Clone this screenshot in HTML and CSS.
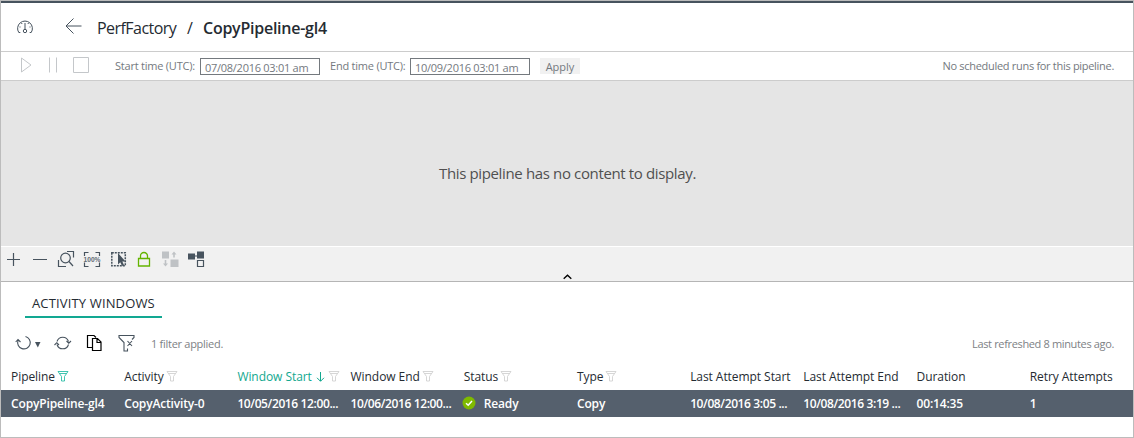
FILE: index.html
```html
<!DOCTYPE html>
<html lang="en">
<head>
<meta charset="utf-8">
<title>CopyPipeline-gl4</title>
<link rel="stylesheet" href="styles.css">
</head>
<body>
<svg class="defs" width="0" height="0">
  <defs>
    <symbol id="funnel" viewBox="0 0 12 12"><path d="M1 1.500h10L7.500 6.500v4.500h-3V6.500zM2.500 3.500h7"/></symbol>
  </defs>
</svg>
<div class="app">
  <header class="header">
    <svg class="gauge" width="18" height="16" viewBox="0 0 18 16"><path d="M4.300 13.500H2.800A7.400 7.400 0 1 1 15.200 13.500h-1.500M9 4v6.300"/><circle cx="9" cy="12" r="1.700"/><path class="ticks" d="M3.500 8h1M13.500 8h1M5.300 4.500h1M11.700 4.500h1"/></svg>
    <svg class="back" width="17" height="17" viewBox="0 0 17 17"><path d="M8.500 .5 1 8l7.500 7.500M1 8h15.500"/></svg>
    <nav class="crumbs"><span class="factory">PerfFactory</span><span class="slash">/</span><strong class="name">CopyPipeline-gl4</strong></nav>
  </header>
  <div class="runbar">
    <svg class="run-icons" width="70" height="18" viewBox="0 0 70 18"><path d="M1.500 2v14L11 9zM29.500 1.500v15M36.500 1.500v15M53.500 1.500h15v15h-15z"/></svg>
    <span class="label start">Start time (UTC):</span><span class="field">07/08/2016 03:01 am</span>
    <span class="label end">End time (UTC):</span><span class="field">10/09/2016 03:01 am</span>
    <span class="apply">Apply</span>
    <span class="schedule">No scheduled runs for this pipeline.</span>
  </div>
  <main class="canvas"><span class="empty">This pipeline has no content to display.</span></main>
  <div class="tools">
    <svg class="tool-icons" width="206" height="22" viewBox="0 0 206 22">
      <g class="dark">
        <path d="M7 11.500h13M13.500 5v13M33 11.500h14"/>
        <path d="M67 3.500h6.500V9.500M58.500 12v6.500H66"/><circle cx="65.500" cy="10" r="4.800"/><path d="m69 13.500 4 4.500"/>
        <path d="M88.500 4.500h-4v3.500M95.500 4.500h4v3.500M84.500 14.500v4h4M99.500 14.500v4h-4"/>
        <path class="dotted" d="M111.800 4.800h13.500v13h-13.500z"/>
      </g>
      <text class="percent" x="83.500" y="14" textLength="17" lengthAdjust="spacingAndGlyphs">100%</text>
      <path class="solid" d="M118 5v11.500l2.300-2.200 1.700 3.700 2-.9-1.700-3.600h3.200z"/>
      <path class="lock" d="M138.500 10.500h11v7.500h-11zM140.500 10.500V8a3.500 3.500 0 0 1 7 0v2.500"/>
      <path class="muted" d="M162 3.500h7v7h-7zM170.500 11.500h8v7.500h-8zM173.200 9.500v-3H171.500l2.500-3 2.500 3h-1.700v3zM164.700 12v3.500H163l2.500 3 2.500-3h-1.700V12z"/>
      <path class="solid" d="M188 5.500h7v2h2V3.500h7v7h-7V8.500h-2v3h-7z"/>
      <path class="dark" d="M197.500 12.500h6v6h-6z"/>
    </svg>
    <svg class="chevron" width="9" height="6" viewBox="0 0 9 6"><path d="M.7 4.800 4.500 1.300l3.800 3.500"/></svg>
  </div>
  <section class="activity">
    <div class="tabs"><span class="tab"><span>ACTIVITY WINDOWS</span></span></div>
    <div class="actions">
      <svg class="action-icons" width="122" height="20" viewBox="0 0 122 20">
        <g class="dark thin"><path d="M3 7.500A6.300 6.300 0 1 0 10.500 3.500M.7 9 3 6.500l2.500 2.500"/><path d="M42 8.500A6 6 0 0 1 53.500 8.500M53.500 11.500a6 6 0 0 1-11.500 0M51.500 8l2.300 2.200L56 8M39.500 12l2.300-2.300L44 12"/><path d="M112.500 15.500v2.500h-3.500V9.500L104 4.500v-2h15v2l-2 2M112.500 8l4.500 5M117 8l-4.500 5"/></g>
        <path class="solid" d="M20 9h5.500l-2.700 5.500z"/>
        <path class="copy" d="M77 14.500h-4.500v-12H79l2 2M77.500 5.500h5l3.500 3.500v8.500h-8.500zM82 5.500v4h4"/>
      </svg>
      <span class="filter-note">1 filter applied.</span>
      <span class="refreshed">Last refreshed 8 minutes ago.</span>
    </div>
    <div class="row head">
      <span class="cell"><span>Pipeline</span><svg class="funnel on"><use href="#funnel"/></svg></span>
      <span class="cell"><span>Activity</span><svg class="funnel"><use href="#funnel"/></svg></span>
      <span class="cell sorted"><span>Window Start</span><svg class="sort" width="9" height="12" viewBox="0 0 9 12"><path d="M4.500 1v9M1 6.800l3.500 3.500L8 6.800"/></svg><svg class="funnel"><use href="#funnel"/></svg></span>
      <span class="cell"><span>Window End</span><svg class="funnel"><use href="#funnel"/></svg></span>
      <span class="cell"><span>Status</span><svg class="funnel"><use href="#funnel"/></svg></span>
      <span class="cell"><span>Type</span><svg class="funnel"><use href="#funnel"/></svg></span>
      <span class="cell">Last Attempt Start</span>
      <span class="cell">Last Attempt End</span>
      <span class="cell">Duration</span>
      <span class="cell">Retry Attempts</span>
    </div>
    <div class="row data">
      <span class="cell">CopyPipeline-gl4</span>
      <span class="cell">CopyActivity-0</span>
      <span class="cell date">10/05/2016 12:00...</span>
      <span class="cell date">10/06/2016 12:00...</span>
      <span class="cell status"><svg width="14" height="14" viewBox="0 0 14 14"><circle cx="7" cy="7" r="6.500"/><path d="m4 7.200 2.200 2L10 5"/></svg>Ready</span>
      <span class="cell">Copy</span>
      <span class="cell date">10/08/2016 3:05 ...</span>
      <span class="cell date">10/08/2016 3:19 ...</span>
      <span class="cell">00:14:35</span>
      <span class="cell">1</span>
    </div>
  </section>
</div>
</body>
</html>
```
FILE: styles.css
```css
* { box-sizing: border-box; }
body { margin: 0; background: #fff; font-family: "Open Sans", "Noto Sans", sans-serif; font-size: 12px; color: #252b32; }
svg { fill: none; flex: none; display: block; }
.defs { position: absolute; }
.app { width: 1134px; height: 438px; border: 1px solid #bcbcbc; display: flex; flex-direction: column; white-space: nowrap; }
.header { height: 51px; border-top: 2px solid #47535e; border-bottom: 1px solid #ccc; display: flex; align-items: flex-start; padding-left: 15px; }
.gauge { margin-top: 16px; stroke: #47535e; }
.ticks { stroke-dasharray: 1; }
.back { margin: 15px 0 0 31px; stroke: #47535e; }
.crumbs { display: flex; margin: 13px 0 0 15px; font-size: 16px; line-height: 25px; }
.factory { width: 90px; letter-spacing: -.55px; }
.slash { width: 16px; }
.name { font-weight: 600; letter-spacing: -.25px; }
.runbar { height: 29px; border-bottom: 1px solid #ccc; display: flex; align-items: center; padding: 0 19px 1px 19px; color: #74797e; font-size: 11px; }
.run-icons { stroke: #c4c7ca; margin-top: -2px; }
.label { letter-spacing: -.22px; }
.start { width: 85px; margin-left: 25px; }
.end { width: 80px; margin-left: 10px; }
.field { width: 120px; height: 17px; border: 1px solid #74797e; padding-left: 4px; line-height: 17px; margin-top: 1px; letter-spacing: -.27px; }
.apply { width: 40px; height: 16px; margin: 1px 0 0 10px; background: #f1f1f1; text-align: center; line-height: 17px; }
.schedule { margin-left: auto; letter-spacing: -.3px; }
.canvas { height: 165px; background: #e5e5e5; display: flex; justify-content: center; padding: 81px 0 0 1px; color: #505050; font-size: 15px; line-height: 22px; }
.empty { letter-spacing: -.36px; }
.tools { position: relative; height: 36px; background: #f1f1f1; border-top: 1px solid #fff; border-bottom: 1px solid #b5b5b5; padding-top: 1px; }
.tool-icons { margin-left: -1px; }
.dark { stroke: #47535e; stroke-width: 1.2; }
.thin { stroke-width: 1.1; }
.dotted { stroke-dasharray: 2 1; stroke-width: 1.5; }
.percent { font: bold 8px "Liberation Sans", sans-serif; fill: #626c76; }
.solid { fill: #47535e; }
.lock { stroke: #64b400; stroke-width: 1.3; }
.muted { fill: #bfc2c5; }
.chevron { position: absolute; left: 562px; top: 27px; stroke: #000; stroke-width: 1.4; }
.tabs { height: 36px; padding-left: 24px; }
.tab { display: block; width: 137px; height: 36px; border-bottom: 2px solid #12a892; padding: 11px 0 0 7px; line-height: 20px; font-size: 13px; letter-spacing: .15px; }
.actions { height: 46px; display: flex; align-items: center; padding: 4px 19px 0 14px; font-size: 11px; color: #7d8185; }
.action-icons { margin-top: -1px; }
.copy { stroke: #000; stroke-width: 1.2; }
.filter-note { margin-left: 14px; letter-spacing: -.28px; }
.refreshed { margin-left: auto; letter-spacing: -.35px; }
.row { display: grid; grid-template-columns: repeat(10, 113.2px); padding-left: 10px; overflow: hidden; }
.cell { display: flex; align-items: center; min-width: 0; }
.head { height: 26px; letter-spacing: -.06px; }
.head .cell { padding-bottom: 1px; }
.funnel { width: 12px; height: 12px; margin: -1px 0 0 2px; stroke: #ccc; stroke-width: .8; }
.on { stroke: #12b59c; }
.sorted { color: #12a88f; }
.sort { stroke: #12a88f; margin: 0 1px 0 4px; }
.data { height: 27px; background: #55606d; color: #fff; font-weight: 600; letter-spacing: -.15px; }
.date { letter-spacing: -.38px; }
.status svg { margin: -2px 8px 0 -2px; }
.status circle { fill: #7fba00; }
.status path { stroke: #fff; stroke-width: 1.5; }
```
